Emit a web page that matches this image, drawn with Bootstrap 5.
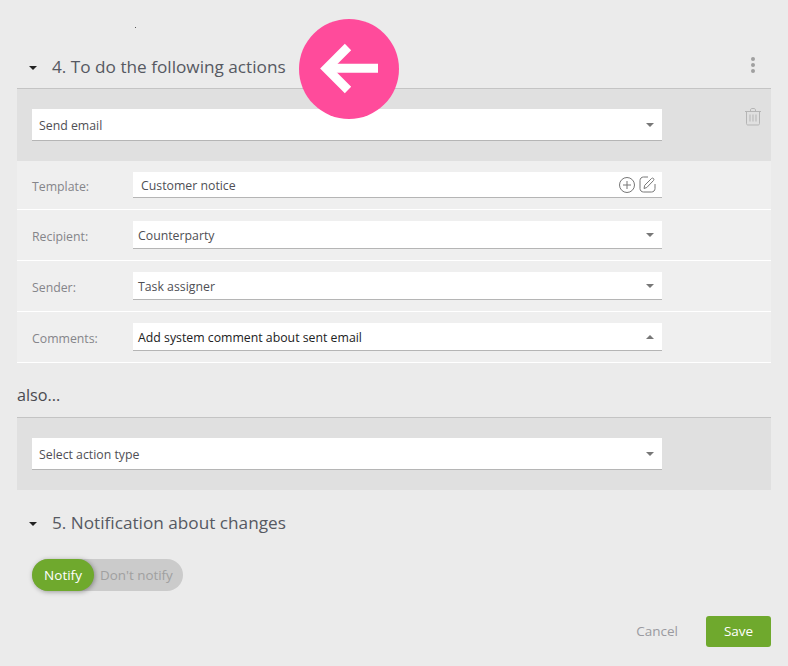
<!DOCTYPE html>
<html lang="en">
<head>
    <meta charset="UTF-8">
    <meta name="viewport" content="width=device-width, initial-scale=1">
    <title>Rule actions</title>

    <link href="https://cdn.jsdelivr.net/npm/bootstrap@5.3.0/dist/css/bootstrap.min.css" rel="stylesheet">

    <style>
        html, body {
            height: 666px;
            overflow: hidden;
        }
        body {
            background-color: #ebebeb;
            font-family: "Open Sans", "Liberation Sans", sans-serif;
            font-size: 12.3px;
            color: #4f4f55;
        }
        .page-wrap {
            position: relative;
            height: 666px;
            padding: 44px 17px 0 17px;
        }
        .speck {
            position: absolute;
            left: 135px;
            top: 27px;
            width: 1px;
            height: 1px;
            background: #555;
        }
        .section-head {
            height: 44px;
            padding-left: 12px;
            font-size: 17.2px;
            color: #565962;
        }
        .section-head > span:nth-child(2) {
            padding-top: 2px;
        }
        .caret-down {
            width: 0;
            height: 0;
            border-left: 4.5px solid transparent;
            border-right: 4.5px solid transparent;
            border-top: 4.5px solid #222;
            margin-right: 14px;
            margin-top: 3px;
        }
        .section-head .caret-down + span {
            margin-left: 1px;
        }
        .more-dots {
            margin-left: auto;
            margin-right: 16px;
            margin-bottom: 2px;
            gap: 2px;
        }
        .more-dots span {
            width: 4px;
            height: 4px;
            border-radius: 50%;
            background: #a0a0a0;
        }
        .action-panel {
            position: relative;
            height: 73px;
            padding: 20px 15px;
            background: #e0e0e0;
            border-top: 1px solid #c4c4c4;
        }
        .fake-select {
            width: 630px;
            height: 32px;
            padding: 0 8px 0 7px;
            background: #fff;
            border-bottom: 1px solid #b5b5b5;
        }
        .fake-select.short-field {
            width: 529px;
            height: 28px;
            padding-left: 5px;
        }
        .fake-select > span:first-child {
            padding-top: 3px;
        }
        .tri-down, .tri-up {
            width: 0;
            height: 0;
            border-left: 4.5px solid transparent;
            border-right: 4.5px solid transparent;
            margin-left: auto;
            margin-top: 1px;
        }
        .tri-down { border-top: 4px solid #777; }
        .tri-up { border-bottom: 4px solid #777; }
        .trash-btn {
            position: absolute;
            right: 10px;
            top: 18px;
        }
        .param-row {
            height: 51px;
            padding-left: 15px;
            background: #efefef;
            border-bottom: 1px solid #fff;
        }
        .param-row.first-row { height: 49px; }
        .param-label {
            width: 101px;
            padding-top: 4px;
            color: #85858a;
        }
        .fake-select.template-field {
            height: 26px;
            padding-left: 8px;
            padding-right: 6px;
        }
        .strong-text { color: #222; }
        .also-text {
            height: 54px;
            font-size: 16.2px;
            color: #4a4a50;
            padding-top: 10px;
        }
        .section-head.second-head {
            height: 64px;
        }
        .notify-toggle {
            width: 151px;
            height: 32px;
            margin-left: 15px;
            margin-top: 5px;
            border-radius: 16px;
            background: #cbcbcb;
            color: #a0a0a0;
            font-size: 13.4px;
        }
        .notify-on {
            width: 62px;
            height: 32px;
            border-radius: 16px;
            background: #6fa92d;
            color: #fff;
            font-size: 13.5px;
            box-shadow: 1px 1px 5px rgba(0,0,0,.35);
        }
        .notify-off { padding-left: 6px; }
        .form-actions {
            position: absolute;
            right: 17px;
            top: 616px;
            gap: 28px;
            font-size: 13.5px;
        }
        .cancel-link { color: #9a9aa0; text-decoration: none; }
        .btn.save-btn {
            width: 65px;
            height: 31px;
            padding: 0;
            background: #6fa92d;
            border: 0;
            border-radius: 3px;
            color: #fff;
            font-size: 13.5px;
        }
        .back-circle {
            position: absolute;
            left: 299px;
            top: 19px;
            width: 100px;
            height: 100px;
            border-radius: 50%;
            background: #ff4b9b;
        }
    </style>
</head>
<body>

    <div class="page-wrap">
        <div class="speck"></div>

        <!-- Section 4 -->
        <div class="section-head d-flex align-items-center">
            <span class="caret-down"></span>
            <span>4. To do the following actions</span>
            <div class="more-dots d-flex flex-column"><span></span><span></span><span></span></div>
        </div>

        <div class="action-panel">
            <div class="fake-select d-flex align-items-center">
                <span>Send email</span><span class="tri-down"></span>
            </div>
            <div class="trash-btn">
                <svg width="16" height="18" viewBox="0 0 16 18" fill="none" stroke="#b5b5b5" stroke-width="1">
                    <path d="M0 3.5h16M5.5 3.5V2c0-.8.6-1.500 1.500-1.500h2c.8 0 1.500.7 1.500 1.500v1.500"/>
                    <path d="M1.500 3.500v12c0 1 .6 1.500 1.500 1.500h10c.9 0 1.500-.5 1.500-1.500v-12"/>
                    <path d="M5 6.500v7M8 6.500v7M11 6.500v7"/>
                </svg>
            </div>
        </div>

        <div class="param-row first-row d-flex align-items-center">
            <div class="param-label">Template:</div>
            <div class="fake-select short-field template-field d-flex align-items-center">
                <span>Customer notice</span>
                <svg class="ms-auto" width="16" height="16" viewBox="0 0 16 16" fill="none" stroke="#777" stroke-width="1">
                    <circle cx="8" cy="8" r="7.500"/><path d="M8 4v8M4 8h8"/>
                </svg>
                <svg class="ms-1" width="17" height="17" viewBox="0 0 17 17" fill="none" stroke="#777" stroke-width="1">
                    <path d="M9 1H4.500C2.500 1 1 2.500 1 4.500v8C1 14.500 2.500 16 4.500 16h8c2 0 3.500-1.500 3.500-3.500V8"/>
                    <path d="M5 12.500l.7-3.200L12.500 2.500c.6-.6 1.500-.6 2 0s.6 1.400 0 2L7.800 11.500z"/>
                </svg>
            </div>
        </div>
        <div class="param-row d-flex align-items-center">
            <div class="param-label">Recipient:</div>
            <div class="fake-select short-field d-flex align-items-center">
                <span>Counterparty</span><span class="tri-down"></span>
            </div>
        </div>
        <div class="param-row d-flex align-items-center">
            <div class="param-label">Sender:</div>
            <div class="fake-select short-field d-flex align-items-center">
                <span>Task assigner</span><span class="tri-down"></span>
            </div>
        </div>
        <div class="param-row d-flex align-items-center">
            <div class="param-label">Comments:</div>
            <div class="fake-select short-field d-flex align-items-center">
                <span class="strong-text">Add system comment about sent email</span><span class="tri-up"></span>
            </div>
        </div>

        <div class="also-text d-flex align-items-center">also...</div>

        <div class="action-panel">
            <div class="fake-select d-flex align-items-center">
                <span>Select action type</span><span class="tri-down"></span>
            </div>
        </div>

        <!-- Section 5 -->
        <div class="section-head second-head d-flex align-items-center">
            <span class="caret-down"></span>
            <span>5. Notification about changes</span>
        </div>

        <div class="notify-toggle d-flex align-items-center">
            <div class="notify-on d-flex align-items-center justify-content-center">Notify</div>
            <div class="notify-off">Don't notify</div>
        </div>

        <div class="form-actions d-flex align-items-center">
            <a href="#" class="cancel-link">Cancel</a>
            <button type="button" class="btn save-btn">Save</button>
        </div>

        <!-- Back arrow overlay -->
        <div class="back-circle d-flex align-items-center justify-content-center">
            <svg width="100" height="100" viewBox="0 0 100 100" fill="none" stroke="#fff" stroke-width="9">
                <path d="M79 49.300H28"/>
                <path d="M49 28L27.500 49.500L49 71"/>
            </svg>
        </div>
    </div>

    <script src="https://cdn.jsdelivr.net/npm/bootstrap@5.3.0/dist/js/bootstrap.bundle.min.js"></script>

</body>
</html>
